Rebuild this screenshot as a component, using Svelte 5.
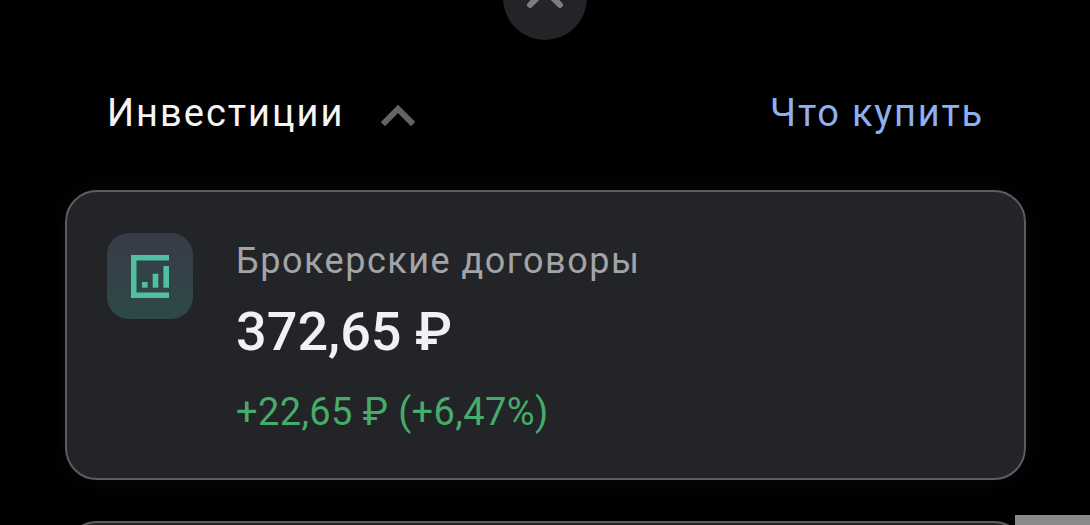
<script lang="ts">
	const bars = [
		{ x: 11, y: 27, h: 5.7 },
		{ x: 21.7, y: 18.7, h: 14 },
		{ x: 32.4, y: 11, h: 21.7 }
	];
</script>

<div class="screen">
	<button type="button" class="close" aria-label="Закрыть">
		<svg width="84" height="40" viewBox="0 0 84 40">
			<path d="M27 5 L42 -10 L57 5" />
		</svg>
	</button>

	<header class="head">
		<div class="title">
			<h2>Инвестиции</h2>
			<svg class="chevron" width="34" height="24" viewBox="0 0 34 24">
				<path d="M4 20 L17 7 L30 20" />
			</svg>
		</div>
		<a class="buy" href="#buy">Что купить</a>
	</header>

	<section class="card">
		<div class="logo">
			<svg width="38" height="43" viewBox="0 0 38 43">
				<path class="frame" d="M38 2.75 H2.75 V40.25 H38" />
				{#each bars as b}
					<rect x={b.x} y={b.y} width="5.6" height={b.h} />
				{/each}
			</svg>
		</div>
		<div class="info">
			<div class="label">Брокерские договоры</div>
			<div class="sum">372,65 ₽</div>
			<div class="delta">+22,65 ₽ (+6,47%)</div>
		</div>
	</section>

	<div class="next"></div>
	<div class="scrap"></div>
</div>

<style>
	:global(body) {
		margin: 0;
		background: #000;
	}

	.screen {
		position: relative;
		width: 1090px;
		height: 525px;
		overflow: hidden;
		background: #000;
		font-family: Roboto, "Noto Sans", sans-serif;
	}

	.close {
		position: absolute;
		left: 503px;
		top: -44px;
		width: 84px;
		height: 84px;
		padding: 44px 0 0;
		border: 0;
		border-radius: 50%;
		background: #232428;
		display: flex;
	}

	.close svg {
		overflow: visible;
	}

	.close path {
		fill: none;
		stroke: #7c7d81;
		stroke-width: 6;
		stroke-linecap: round;
	}

	.head {
		display: flex;
		justify-content: space-between;
		align-items: center;
		height: 46px;
		padding: 90px 106px 0 107px;
	}

	.title {
		display: flex;
		align-items: center;
		gap: 37px;
	}

	h2 {
		margin: 0;
		color: #f5f5f6;
		font-size: 38px;
		font-weight: 400;
		letter-spacing: 2px;
	}

	.chevron {
		margin-top: 1px;
	}

	.chevron path {
		fill: none;
		stroke: #646464;
		stroke-width: 6;
		stroke-linecap: square;
	}

	.buy {
		color: #8fb0f0;
		font-size: 38px;
		letter-spacing: 1.8px;
		text-decoration: none;
	}

	.card {
		display: flex;
		gap: 43px;
		box-sizing: border-box;
		width: 961px;
		height: 290px;
		margin: 54px 0 0 65px;
		padding: 41px 40px;
		border: 2px solid #5c5d62;
		border-radius: 32px;
		background: #232428;
		box-shadow: 0 0 24px rgba(255, 255, 255, 0.04);
	}

	.logo {
		flex: none;
		display: flex;
		align-items: center;
		justify-content: center;
		width: 86px;
		height: 86px;
		border-radius: 22px;
		background: linear-gradient(#3a3a4a, #2c4a47);
	}

	.logo .frame {
		fill: none;
		stroke: #50c0a0;
		stroke-width: 5.5;
	}

	.logo rect {
		fill: #50c0a0;
	}

	.info {
		min-width: 0;
	}

	.label {
		margin-top: 6px;
		color: #a3a4a8;
		font-size: 36px;
		line-height: 44px;
		letter-spacing: 1.5px;
	}

	.sum {
		margin-top: 18px;
		color: #f1f1f3;
		font-size: 54px;
		line-height: 62px;
		font-weight: 500;
	}

	.delta {
		margin-top: 27px;
		color: #45ad69;
		font-size: 38px;
		line-height: 44px;
		letter-spacing: 0.4px;
	}

	.next {
		position: absolute;
		left: 65px;
		top: 521px;
		width: 961px;
		height: 100px;
		box-sizing: border-box;
		border: 2px solid #5c5d62;
		border-radius: 32px;
		background: #232428;
	}

	.scrap {
		position: absolute;
		left: 1015px;
		top: 515px;
		width: 75px;
		height: 10px;
		background: #8a8a8a;
	}
</style>
